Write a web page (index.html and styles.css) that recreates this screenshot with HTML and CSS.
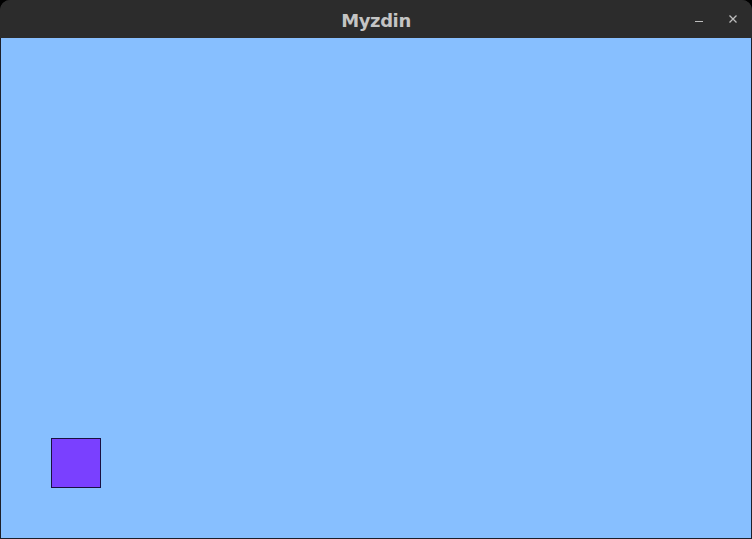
FILE: index.html
```html
<!DOCTYPE html>
<html>
<head>
<meta charset="utf-8">
<link rel="stylesheet" href="styles.css">
</head>
<body>
<div class="window">
  <div class="titlebar">
    <span class="title">Myzdin</span>
    <div class="controls">
      <svg class="ctl" width="12" height="12" viewBox="0 0 12 12"><path d="M1 8.5H9" stroke="#bdbdbd" stroke-width="1.2"/></svg>
      <svg class="ctl" width="12" height="12" viewBox="0 0 12 12"><path d="M2.5 2.5L9.5 9.5M9.5 2.5L2.5 9.5" stroke="#bdbdbd" stroke-width="1.3"/></svg>
    </div>
  </div>
  <div class="content">
    <div class="square"></div>
  </div>
</div>
</body>
</html>
```
FILE: styles.css
```css
html, body {
  margin: 0;
  padding: 0;
  width: 752px;
  height: 539px;
  background: #000;
  overflow: hidden;
}
.window {
  width: 752px;
  height: 539px;
  display: flex;
  flex-direction: column;
  border-radius: 10px 10px 0 0;
  overflow: hidden;
  background: #2b2b2b;
}
.titlebar {
  height: 38px;
  flex: none;
  background: #2c2c2c;
  display: flex;
  align-items: center;
  justify-content: center;
  position: relative;
  box-sizing: border-box;
  padding-top: 3px;
}
.title {
  font-family: "DejaVu Sans", sans-serif;
  font-weight: bold;
  font-size: 18px;
  color: #c4c4c4;
  letter-spacing: -0.4px;
}
.controls {
  position: absolute;
  right: 13px;
  top: 13px;
  display: flex;
  gap: 21px;
}
.ctl {
  display: block;
}
.content {
  flex: 1;
  background: #87bfff;
  border: 1px solid #1c1f2a;
  border-top: none;
  display: flex;
  flex-direction: column;
  justify-content: flex-end;
  align-items: flex-start;
  padding: 0 0 50px 50px;
}
.square {
  width: 48px;
  height: 48px;
  background: #7a40ff;
  border: 1px solid #1a1040;
}
```
